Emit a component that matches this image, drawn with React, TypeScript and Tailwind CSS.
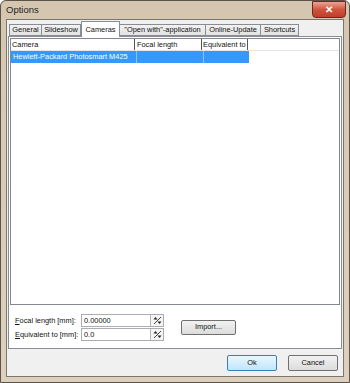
import React from "react";

const tabs = [
  { t: "General", w: "w-[33px]" },
  { t: "Slideshow", w: "w-[40px]" },
  { t: "Cameras", w: "w-[39px]" },
  { t: "\"Open with\"-application", w: "w-[87px]" },
  { t: "Online-Update", w: "w-[56px]" },
  { t: "Shortcuts", w: "w-[39px]" },
];

function Spin() {
  return (
    <div className="w-[13px] h-full border-l border-[#b8b8b8] bg-[#f4f4f4] flex items-center justify-center">
      <svg width="9" height="9" viewBox="0 0 9 9">
        <path d="M1 8 L8 1" stroke="#444" strokeWidth="1" />
        <path d="M2.5 1 L4.5 3.5 L0.5 3.5 Z" fill="#222" />
        <path d="M6.5 8 L4.5 5.5 L8.5 5.5 Z" fill="#222" />
      </svg>
    </div>
  );
}

function Field({ label, value, u }: { label: string; value: string; u: string }) {
  return (
    <div className="flex items-center h-[13px]">
      <span className="w-[66px]">
        <span className="underline">{u}</span>
        {label}
      </span>
      <div className="w-[83px] h-full border border-[#abadb3] bg-white flex">
        <span className="flex-1 pl-[2px] leading-[11px]">{value}</span>
        <Spin />
      </div>
    </div>
  );
}

export default function App() {
  return (
    <div
      className="w-[350px] h-[383px] relative flex flex-col rounded-t-[6px] border border-[#5a544a] bg-gradient-to-b from-[#d5c6b0] to-[#ddd0be] text-[#111] text-[7.4px]"
      style={{ fontFamily: "'Liberation Sans', Arial, sans-serif" }}
    >
      {/* Title bar */}
      <div className="h-[18px] flex items-center pl-[5px] text-[9.5px] text-[#1e1e1e]">Options</div>
      <div className="absolute top-0 right-[3px] w-[34px] h-[17px] rounded-b-[4px] border border-[#6b2a20] bg-gradient-to-b from-[#e8a493] via-[#d0543f] to-[#c13d28] flex items-center justify-center text-white text-[10px] font-bold">
        ✕
      </div>

      {/* Client area */}
      <div className="mx-[5px] mb-[5px] flex-1 flex flex-col bg-[#f0f0f0] border border-[#7d766a]">
        <div className="h-[16px] flex items-end pl-[2px]">
          {tabs.map(({ t, w }) =>
            t === "Cameras" ? (
              <div
                key={t}
                className={`${w} h-[16px] -mb-px z-10 bg-white border border-b-0 border-[#898c95] flex items-center justify-center`}
              >
                {t}
              </div>
            ) : (
              <div
                key={t}
                className={`${w} h-[12px] bg-gradient-to-b from-[#f2f2f2] to-[#e3e3e3] border border-[#898c95] -ml-px first:ml-0 flex items-center justify-center whitespace-nowrap`}
              >
                {t}
              </div>
            )
          )}
        </div>

        <div className="mx-[1px] flex-1 flex flex-col bg-white border border-[#898c95]">
          {/* List view */}
          <div className="m-[1px] flex-1 border border-[#828790] bg-white">
            <div className="flex h-[12px] border-b border-[#e5e5e5]">
              <div className="w-[124px] pl-[1px] border-r border-[#555] flex items-center">Camera</div>
              <div className="w-[67px] pl-[2px] border-r border-[#555] flex items-center">Focal length</div>
              <div className="w-[46px] pl-[1px] border-r border-[#555] flex items-center overflow-hidden whitespace-nowrap">
                Equivalent to
              </div>
            </div>
            <div className="flex h-[12px] text-white">
              <div className="w-[125px] pl-[2px] bg-[#3399ff] flex items-center whitespace-nowrap">
                Hewlett-Packard Photosmart M425
              </div>
              <div className="w-[1px] bg-[#8ec3f7]" />
              <div className="w-[66px] bg-[#3399ff]" />
              <div className="w-[1px] bg-[#8ec3f7]" />
              <div className="w-[45px] bg-[#3399ff]" />
            </div>
          </div>

          {/* Fields */}
          <div className="h-[42px] flex items-center pl-[6px] gap-[17px]">
            <div className="flex flex-col gap-[1px] pt-[1px]">
              <Field u="F" label="ocal length [mm]:" value="0.00000" />
              <Field u="E" label="quivalent to [mm]:" value="0.0" />
            </div>
            <button className="w-[55px] h-[15px] rounded-[2px] border border-[#707070] bg-gradient-to-b from-[#f2f2f2] to-[#dcdcdc] flex items-center justify-center">
              Import...
            </button>
          </div>
        </div>

        {/* Buttons */}
        <div className="h-[27px] flex items-center justify-end pr-[5px] gap-[11px]">
          <button className="w-[50px] h-[16px] rounded-[2px] border border-[#3c7fb1] bg-gradient-to-b from-[#eaf6fd] to-[#bee6fd] flex items-center justify-center">
            Ok
          </button>
          <button className="w-[50px] h-[16px] rounded-[2px] border border-[#707070] bg-gradient-to-b from-[#f2f2f2] to-[#dcdcdc] flex items-center justify-center">
            Cancel
          </button>
        </div>
      </div>
    </div>
  );
}
